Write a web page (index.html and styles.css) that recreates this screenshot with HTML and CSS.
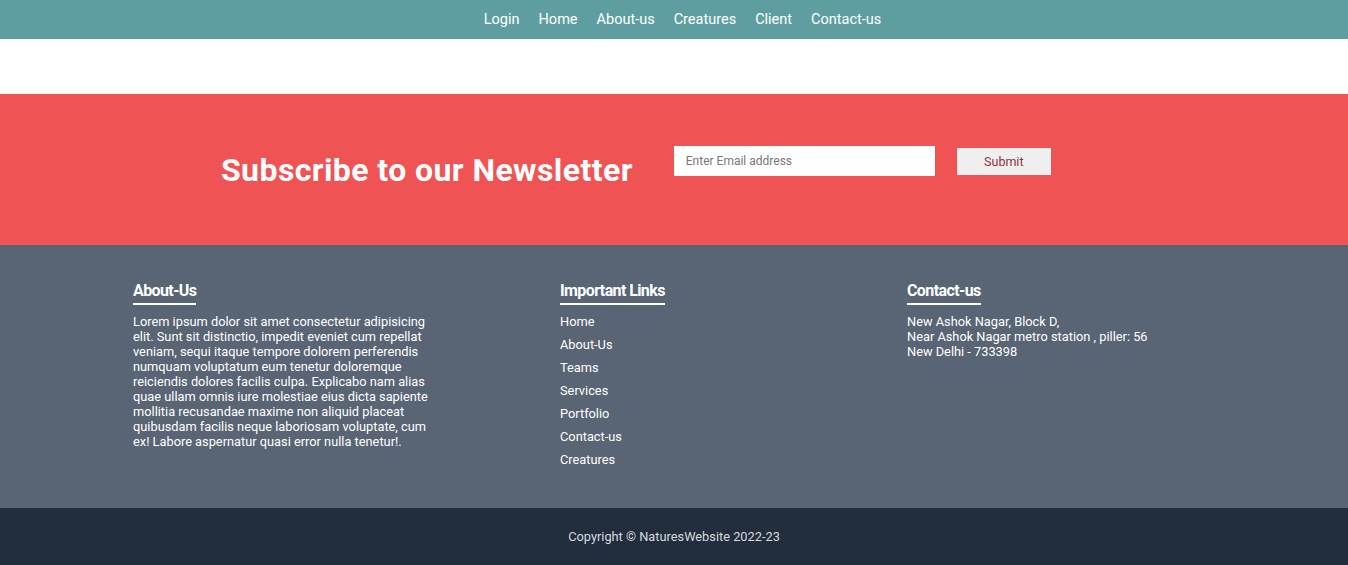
FILE: index.html
```html
<!DOCTYPE html>
<html>
<head>
<meta charset="utf-8">
<link rel="stylesheet" href="styles.css">
</head>
<body>
<nav class="nav">
  <a href="#">Login</a>
  <a href="#">Home</a>
  <a href="#">About-us</a>
  <a href="#">Creatures</a>
  <a href="#">Client</a>
  <a href="#">Contact-us</a>
</nav>
<div class="spacer"></div>
<section class="subscribe">
  <h2 class="sub-title">Subscribe to our Newsletter</h2>
  <form class="sub-form">
    <input class="sub-input" type="text" placeholder="Enter Email address">
    <button class="sub-btn" type="button">Submit</button>
  </form>
</section>
<footer class="footer">
  <div class="col col-about">
    <h3 class="col-title">About-Us</h3>
    <p class="about-text">Lorem ipsum dolor sit amet consectetur adipisicing elit. Sunt sit distinctio, impedit eveniet cum repellat veniam, sequi itaque tempore dolorem perferendis numquam voluptatum eum tenetur doloremque reiciendis dolores facilis culpa. Explicabo nam alias quae ullam omnis iure molestiae eius dicta sapiente mollitia recusandae maxime non aliquid placeat quibusdam facilis neque laboriosam voluptate, cum ex! Labore aspernatur quasi error nulla tenetur!.</p>
  </div>
  <div class="col col-links">
    <h3 class="col-title">Important Links</h3>
    <ul class="links">
      <li>Home</li>
      <li>About-Us</li>
      <li>Teams</li>
      <li>Services</li>
      <li>Portfolio</li>
      <li>Contact-us</li>
      <li>Creatures</li>
    </ul>
  </div>
  <div class="col col-contact">
    <h3 class="col-title">Contact-us</h3>
    <p class="contact-text">New Ashok Nagar, Block D,<br>Near Ashok Nagar metro station , piller: 56<br>New Delhi - 733398</p>
  </div>
</footer>
<div class="copy">Copyright © NaturesWebsite 2022-23</div>
</body>
</html>
```
FILE: styles.css
```css
* { box-sizing: border-box; }
body {
  margin: 0;
  font-family: Roboto, "Liberation Sans", sans-serif;
  color: #fff;
}
.nav {
  height: 39px;
  background: #5f9ea0;
  display: flex;
  justify-content: center;
  align-items: center;
  gap: 19px;
  padding-left: 17px;
}
.nav a {
  color: #fff;
  text-decoration: none;
  font-size: 14.5px;
}
.spacer { height: 55px; background: #fff; }
.subscribe {
  height: 151px;
  background: #ef5354;
  display: flex;
  align-items: center;
  padding-left: 221px;
}
.sub-title {
  margin: 0 41px 0 0;
  font-size: 32px;
  font-weight: 700;
  letter-spacing: 0.42px;
  padding-top: 1px;
}
.sub-form {
  display: flex;
  align-items: center;
  gap: 22px;
  margin-top: -18px;
}
.sub-input {
  width: 261px;
  height: 30px;
  border: none;
  padding: 0 12px;
  font-family: Roboto, sans-serif;
  font-size: 12px;
  outline: none;
}
.sub-input::placeholder { color: #777; }
.sub-btn {
  width: 94px;
  height: 27px;
  border: none;
  background: #efefef;
  color: #8f3040;
  font-family: Roboto, sans-serif;
  font-size: 12.5px;
  margin-top: 1px;
}
.footer {
  height: 263px;
  background: #596474;
  display: flex;
  padding: 36px 0 0 133px;
}
.col-title {
  display: inline-block;
  margin: 0 0 9px;
  font-size: 16px;
  font-weight: 700;
  letter-spacing: -0.6px;
  line-height: 19px;
  padding-bottom: 3px;
  border-bottom: 2px solid #fff;
}
.col-about { width: 427px; }
.col-links { width: 347px; }
.about-text, .contact-text {
  margin: 0;
  font-size: 12.8px;
  line-height: 15px;
  font-weight: 400;
}
.about-text { width: 300px; }
.links {
  list-style: none;
  margin: 0;
  padding: 0;
  font-size: 12.8px;
  font-weight: 400;
}
.links li { line-height: 15px; margin-bottom: 8px; }
.copy {
  height: 57px;
  background: #222d3d;
  color: #d6d9de;
  font-size: 12.8px;
  display: flex;
  justify-content: center;
  align-items: center;
  padding-bottom: 1px;
}
```
